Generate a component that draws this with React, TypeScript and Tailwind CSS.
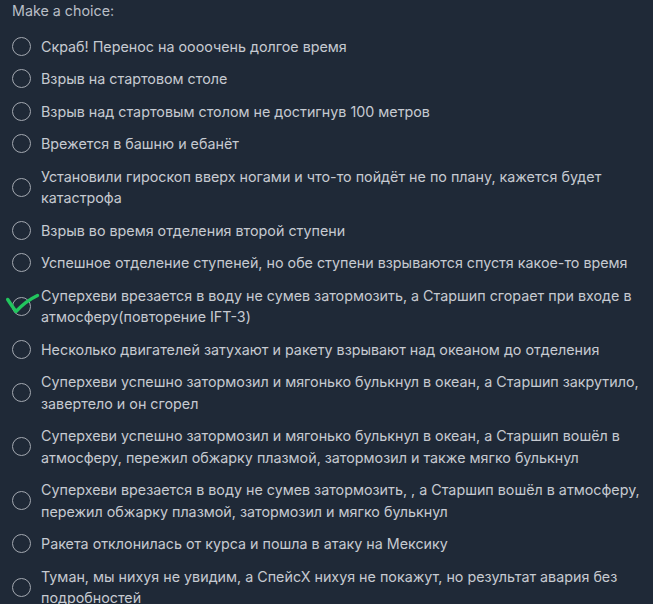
import React from "react";

const options: string[] = [
  "Скраб! Перенос на оооочень долгое время",
  "Взрыв на стартовом столе",
  "Взрыв над стартовым столом не достигнув 100 метров",
  "Врежется в башню и ебанёт",
  "Установили гироскоп вверх ногами и что-то пойдёт не по плану, кажется будет катастрофа",
  "Взрыв во время отделения второй ступени",
  "Успешное отделение ступеней, но обе ступени взрываются спустя какое-то время",
  "Суперхеви врезается в воду не сумев затормозить, а Старшип сгорает при входе в атмосферу(повторение IFT-3)",
  "Несколько двигателей затухают и ракету взрывают над океаном до отделения",
  "Суперхеви успешно затормозил и мягонько булькнул в океан, а Старшип закрутило, завертело и он сгорел",
  "Суперхеви успешно затормозил и мягонько булькнул в океан, а Старшип вошёл в атмосферу, пережил обжарку плазмой, затормозил и также мягко булькнул",
  "Суперхеви врезается в воду не сумев затормозить, , а Старшип вошёл в атмосферу, пережил обжарку плазмой, затормозил и мягко булькнул",
  "Ракета отклонилась от курса и пошла в атаку на Мексику",
  "Туман, мы нихуя не увидим, а СпейсХ нихуя не покажут, но результат авария без подробностей",
];

export default function App() {
  return (
    <div
      className="min-h-screen w-full bg-[#1f2937] pl-3 pr-[7px] text-[14.3px] leading-[21.5px] text-[#c6cad1]"
      style={{ fontFamily: "Inter, 'Noto Sans', sans-serif" }}
    >
      <div className="mb-[14px] text-[#b9bec6]">Make a choice:</div>
      <ul className="flex flex-col gap-[11px]">
        {options.map((o, i) => (
          <li key={i} className="flex items-center gap-[10px]">
            <span className="relative h-[19px] w-[19px] shrink-0 rounded-full border-[1.5px] border-[#a3a8b0]">
              {i === 7 && (
                <svg
                  className="absolute left-[-8px] top-[-6px]"
                  width="36"
                  height="24"
                  viewBox="0 0 36 24"
                  fill="none"
                >
                  <path
                    d="M2.7 7.5 C5 11 8 15.5 11 19.5 C17 13 24 7.5 32.5 3.5"
                    stroke="#22c55e"
                    strokeWidth="3.4"
                    strokeLinecap="round"
                    strokeLinejoin="round"
                  />
                </svg>
              )}
            </span>
            <span>{o}</span>
          </li>
        ))}
      </ul>
    </div>
  );
}
